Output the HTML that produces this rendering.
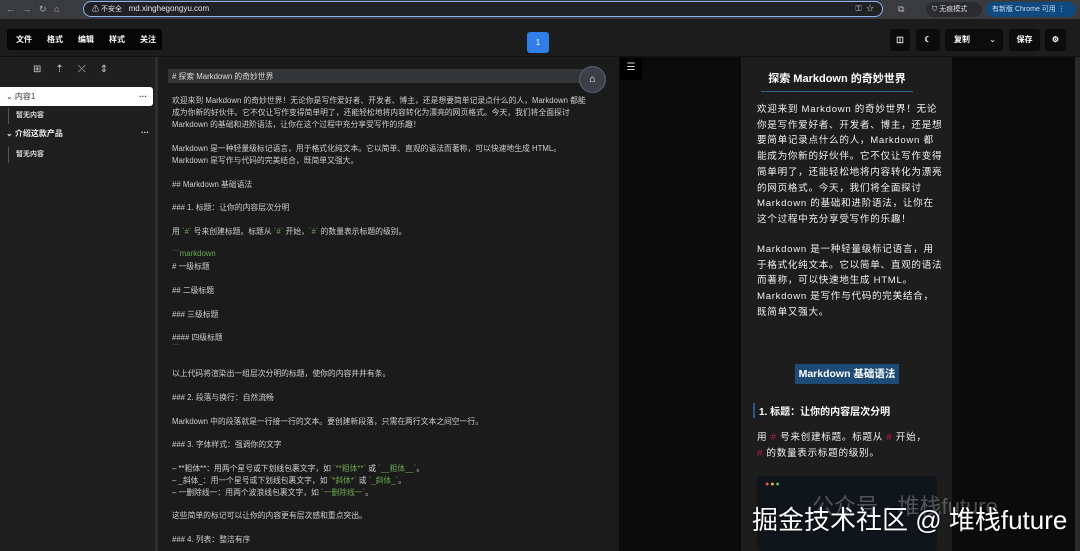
<!DOCTYPE html>
<html><head><meta charset="utf-8"><style>
*{margin:0;padding:0;box-sizing:border-box}
body{width:1080px;height:551px;overflow:hidden;background:#1a1a1b;font-family:"Liberation Sans","Noto Sans CJK SC",sans-serif;color:#ddd;position:relative}
.abs{position:absolute}
#bar{left:0;top:0;width:1080px;height:19px;background:#3a3b3e}
#url{left:83px;top:1px;width:800px;height:16px;border:1px solid #8ab4f8;border-radius:9px;background:#202124;font-size:8px;color:#e8e8e8;line-height:14px;padding-left:8px}
#hdr{left:0;top:19px;width:1080px;height:38px;background:#1c1c1d;border-bottom:1px solid #111}
#menu{left:7px;top:29px;width:155px;height:21px;background:#050505;border-radius:3px;font-size:8px;font-weight:bold;color:#fff;display:flex;gap:15px;padding-left:9px;line-height:21px}
.btn{background:#0c0c0c;border-radius:3px;height:22px;top:29px;font-size:8px;font-weight:bold;color:#fff;line-height:22px;text-align:center}
#side{left:0;top:57px;width:155px;height:494px;background:#1f1f20}
#div{left:155px;top:57px;width:3px;height:494px;background:#2e2e2e}
#ed{left:158px;top:57px;width:460px;height:494px;background:#1b1b1c;font-size:7.8px;color:#cfcfcf}
.l{position:absolute;left:14px;white-space:nowrap}
.g{color:#6aa84f}
#prev{left:619px;top:57px;width:461px;height:494px;background:#0b0b0b}
#card{left:741px;top:57px;width:211px;height:494px;background:#1d1d1e}
.p{position:absolute;left:757px;white-space:nowrap;font-size:9.6px;line-height:15.7px;letter-spacing:0.7px;color:#f0f0f0}
</style></head><body>
<div id="bar" class="abs"></div>
<div class="abs" style="left:6px;top:4px;font-size:9px;color:#aaa">←&nbsp;&nbsp;&nbsp;→&nbsp;&nbsp;&nbsp;↻&nbsp;&nbsp;&nbsp;⌂</div>
<div id="url" class="abs"><span style="font-size:7px">⚠ 不安全</span>&nbsp;&nbsp;&nbsp;md.xinghegongyu.com<span style="position:absolute;right:8px;color:#bbb">⚿&nbsp;&nbsp;☆</span></div>
<div class="abs" style="left:898px;top:4px;font-size:9px;color:#bbb">⧉</div>
<div class="abs" style="left:926px;top:2px;width:56px;height:15px;border-radius:8px;background:#2b2c2f;font-size:7px;color:#ddd;line-height:15px;padding-left:6px">⛉ 无痕模式</div>
<div class="abs" style="left:986px;top:2px;width:90px;height:15px;border-radius:8px;background:#0e4a80;font-size:7px;color:#cde;line-height:15px;padding-left:6px">有新版 Chrome 可用 ⋮</div>
<div id="hdr" class="abs"></div>
<div id="menu" class="abs"><span>文件</span><span>格式</span><span>编辑</span><span>样式</span><span>关注</span></div>
<div class="abs" style="left:527px;top:32px;width:22px;height:21px;background:#2f7de9;border-radius:3px;font-size:8px;color:#fff;text-align:center;line-height:21px">1</div>
<div class="abs btn" style="left:890px;width:20px">◫</div>
<div class="abs btn" style="left:916px;width:24px">☾</div>
<div class="abs btn" style="left:945px;width:58px;text-align:left;padding-left:9px">复制<span style="position:absolute;right:7px;font-weight:normal">⌄</span></div>
<div class="abs btn" style="left:1009px;width:31px">保存</div>
<div class="abs btn" style="left:1045px;width:21px">⚙</div>
<div id="side" class="abs"></div>
<div class="abs" style="left:33px;top:64px;font-size:10px;color:#ccc;letter-spacing:14px">⊞⇡⤫⇕</div>
<div class="abs" style="left:0;top:87px;width:153px;height:19px;background:#fff;border-radius:0 3px 3px 0;font-size:8px;color:#333;line-height:19px;padding-left:6px">⌄ 内容1<span style="position:absolute;right:6px;font-weight:bold">···</span></div>
<div class="abs" style="left:8px;top:108px;height:16px;border-left:1px solid #555;font-size:7px;color:#ddd;line-height:16px;padding-left:7px;font-weight:bold">暂无内容</div>
<div class="abs" style="left:6px;top:128px;width:143px;font-size:8px;color:#eee;font-weight:bold">⌄ 介绍这款产品<span style="position:absolute;right:0">···</span></div>
<div class="abs" style="left:8px;top:147px;height:16px;border-left:1px solid #555;font-size:7px;color:#ddd;line-height:16px;padding-left:7px;font-weight:bold">暂无内容</div>
<div id="div" class="abs"></div>
<div id="ed" class="abs">
<div class="abs" style="left:10px;top:12px;width:422px;height:14px;background:#333436"></div>
<div class="l" style="top:14px;color:#ddd"># 探索 Markdown 的奇妙世界</div>
<div class="l" style="top:38px;line-height:11.9px">欢迎来到 Markdown 的奇妙世界！无论你是写作爱好者、开发者、博主，还是想要简单记录点什么的人，Markdown 都能<br>成为你新的好伙伴。它不仅让写作变得简单明了，还能轻松地将内容转化为漂亮的网页格式。今天，我们将全面探讨<br>Markdown 的基础和进阶语法，让你在这个过程中充分享受写作的乐趣！</div>
<div class="l" style="top:86px;line-height:11.9px">Markdown 是一种轻量级标记语言，用于格式化纯文本。它以简单、直观的语法而著称，可以快速地生成 HTML。<br>Markdown 是写作与代码的完美结合，既简单又强大。</div>
<div class="l" style="top:122px">## Markdown 基础语法</div>
<div class="l" style="top:145px">### 1. 标题：让你的内容层次分明</div>
<div class="l" style="top:169px">用 <span class="g">&#96;#&#96;</span> 号来创建标题。标题从 <span class="g">&#96;#&#96;</span> 开始，<span class="g">&#96;#&#96;</span> 的数量表示标题的级别。</div>
<div class="l g" style="top:192px"><span style="color:#777">&#96;&#96;&#96;</span>markdown</div>
<div class="l" style="top:204px"># 一级标题</div>
<div class="l" style="top:228px">## 二级标题</div>
<div class="l" style="top:252px">### 三级标题</div>
<div class="l" style="top:275px">#### 四级标题</div>
<div class="l" style="top:286px;color:#777">&#96;&#96;&#96;</div>
<div class="l" style="top:311px">以上代码将渲染出一组层次分明的标题，使你的内容井井有条。</div>
<div class="l" style="top:335px">### 2. 段落与换行：自然流畅</div>
<div class="l" style="top:359px">Markdown 中的段落就是一行接一行的文本。要创建新段落，只需在两行文本之间空一行。</div>
<div class="l" style="top:382px">### 3. 字体样式：强调你的文字</div>
<div class="l" style="top:406px;line-height:11.9px">– **粗体**：用两个星号或下划线包裹文字，如 <span class="g">&#96;**粗体**&#96;</span> 或 <span class="g">&#96;__粗体__&#96;</span>。<br>– _斜体_：用一个星号或下划线包裹文字，如 <span class="g">&#96;*斜体*&#96;</span> 或 <span class="g">&#96;_斜体_&#96;</span>。<br>– 一删除线一：用两个波浪线包裹文字，如 <span class="g">&#96;一删除线一&#96;</span>。</div>
<div class="l" style="top:453px">这些简单的标记可以让你的内容更有层次感和重点突出。</div>
<div class="l" style="top:477px">### 4. 列表：整洁有序</div>
</div>
<div class="abs" style="left:579px;top:66px;width:27px;height:27px;border-radius:50%;background:#3b4048;border:1px solid #5a6270;color:#fff;font-size:10px;text-align:center;line-height:25px">⌂</div>
<div id="prev" class="abs"></div>
<div class="abs" style="left:620px;top:58px;width:22px;height:22px;background:#000;color:#ddd;font-size:10px;text-align:center;line-height:20px;border-radius:3px">☰</div>
<div id="card" class="abs"></div>
<div class="abs" style="left:1075px;top:57px;width:5px;height:494px;background:#2a2a2a"></div>
<div class="abs" style="left:761px;top:70px;width:152px;text-align:center;font-size:11px;font-weight:bold;color:#fff;padding-bottom:5px;border-bottom:1px solid #2a6a8a">探索 Markdown 的奇妙世界</div>
<div class="p" style="top:102px">欢迎来到 Markdown 的奇妙世界！无论<br>你是写作爱好者、开发者、博主，还是想<br>要简单记录点什么的人，Markdown 都<br>能成为你新的好伙伴。它不仅让写作变得<br>简单明了，还能轻松地将内容转化为漂亮<br>的网页格式。今天，我们将全面探讨<br>Markdown 的基础和进阶语法，让你在<br>这个过程中充分享受写作的乐趣！</div>
<div class="p" style="top:242px">Markdown 是一种轻量级标记语言，用<br>于格式化纯文本。它以简单、直观的语法<br>而著称，可以快速地生成 HTML。<br>Markdown 是写作与代码的完美结合，<br>既简单又强大。</div>
<div class="abs" style="left:795px;top:364px;width:104px;height:20px;background:#1e4b75;color:#fff;font-size:10.5px;font-weight:bold;text-align:center;line-height:20px">Markdown 基础语法</div>
<div class="abs" style="left:753px;top:403px;border-left:2px solid #2a5a8a;padding-left:4px;font-size:10px;font-weight:bold;color:#fff">1. 标题：让你的内容层次分明</div>
<div class="p" style="top:430px">用 <span style="color:#c2185b">#</span> 号来创建标题。标题从 <span style="color:#c2185b">#</span> 开始，<br><span style="color:#c2185b">#</span> 的数量表示标题的级别。</div>
<div class="abs" style="left:757px;top:476px;width:180px;height:75px;background:#10151c;border-radius:4px"></div>
<div class="abs" style="left:765px;top:481px;font-size:7px;letter-spacing:1px"><span style="color:#e0584e">●</span><span style="color:#e0b03e">●</span><span style="color:#5cb85c">●</span></div>
<div class="abs" style="left:812px;top:489px;font-size:22px;color:rgba(200,200,200,0.35)">公众号 · 堆栈future</div>
<div class="abs" style="left:752px;top:500px;font-size:26px;color:#fff;text-shadow:0 0 2px #000">掘金技术社区 @ 堆栈future</div>
</body></html>
